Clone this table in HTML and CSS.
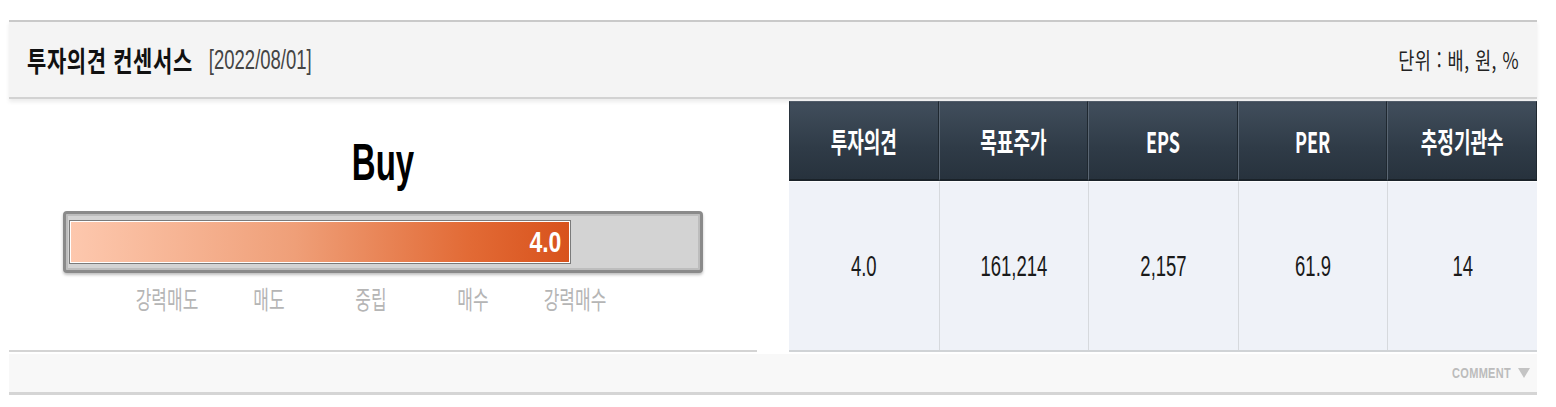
FILE: index.html
```html
<!DOCTYPE html>
<html lang="ko">
<head>
<meta charset="utf-8">
<title>투자의견 컨센서스</title>
<link rel="stylesheet" href="styles.css">
</head>
<body>
<div class="wrap">
  <div class="head">
    <div class="head-left">
      <span class="title sy">투자의견 컨센서스</span>
      <span class="date sy">[2022/08/01]</span>
    </div>
    <span class="unit sy">단위 : 배, 원, %</span>
  </div>
  <div class="content">
    <div class="gauge-panel">
      <div class="opinion"><span class="buy sy">Buy</span></div>
      <div class="bar">
        <div class="track">
          <div class="fill" style="width: 80%"><span class="score sy">4.0</span></div>
        </div>
      </div>
      <div class="labels">
        <span class="lab"><span class="sy">강력매도</span></span>
        <span class="lab"><span class="sy">매도</span></span>
        <span class="lab"><span class="sy">중립</span></span>
        <span class="lab"><span class="sy">매수</span></span>
        <span class="lab"><span class="sy">강력매수</span></span>
      </div>
    </div>
    <div class="table">
      <div class="th"><span class="sy">투자의견</span></div>
      <div class="th"><span class="sy">목표주가</span></div>
      <div class="th"><span class="sy">EPS</span></div>
      <div class="th"><span class="sy">PER</span></div>
      <div class="th"><span class="sy">추정기관수</span></div>
      <div class="td"><span class="sy">4.0</span></div>
      <div class="td"><span class="sy">161,214</span></div>
      <div class="td"><span class="sy">2,157</span></div>
      <div class="td"><span class="sy">61.9</span></div>
      <div class="td"><span class="sy">14</span></div>
    </div>
  </div>
  <div class="foot">
    <span class="comment sy">COMMENT</span>
    <span class="tri"></span>
  </div>
</div>
</body>
</html>
```

FILE: styles.css
```css
* { box-sizing: border-box; }
html, body { margin: 0; padding: 0; background: #fff; }
body {
  font-family: "Liberation Sans", "Noto Sans CJK KR", sans-serif;
  color: #222;
}
.wrap {
  width: 1528px;
  margin: 20px 0 0 9px;
}
.sy {
  display: inline-block;
  transform: scaleY(1.55);
}
.head {
  height: 79px;
  background: #f4f4f4;
  border-top: 2px solid #c9c9c9;
  border-bottom: 2px solid #d2d2d2;
  box-shadow: 0 3px 4px rgba(0, 0, 0, 0.08);
  display: flex;
  align-items: center;
  justify-content: space-between;
  padding: 0 18px;
  position: relative;
  z-index: 1;
}
.head-left { display: flex; align-items: center; gap: 16px; }
.title {
  font-family: "Noto Sans CJK KR", sans-serif;
  font-weight: 700;
  font-size: 21px;
  letter-spacing: 0.6px;
  color: #111;
  transform: scaleY(1.35);
}
.date {
  font-size: 18.5px;
  color: #444;
  transform: scaleY(1.45);
}
.unit {
  font-family: "Noto Sans CJK KR", sans-serif;
  font-size: 17.5px;
  color: #222;
  transform: scaleY(1.3);
  letter-spacing: 0.5px;
}
.content {
  display: flex;
  gap: 32px;
  margin-top: 2px;
}
.gauge-panel {
  width: 748px;
  height: 251px;
  border-bottom: 2px solid #d4d4d4;
  padding: 0 0 0 54px;
}
.opinion {
  width: 640px;
  text-align: center;
  height: 110px;
  line-height: 136px;
}
.buy {
  font-size: 33px;
  font-weight: 700;
  color: #000;
  transform: scaleY(1.55);
  line-height: 1;
}
.bar {
  width: 640px;
  height: 62px;
  border: 3px solid #8a8a8a;
  border-radius: 4px;
  background: #d3d3d3;
  box-shadow: inset 0 0 0 2px #bdbdbd, 0 2px 3px rgba(0, 0, 0, 0.25);
  padding: 6px 3px;
}
.track { height: 44px; }
.fill {
  height: 44px;
  border: 1px solid #7a7a7a;
  box-shadow: inset 0 0 0 1px #fff;
  background: linear-gradient(to right, #fdc8ae, #ef9f78 45%, #e26a35 80%, #d8521c);
  display: flex;
  align-items: center;
  justify-content: flex-end;
  padding-right: 9px;
}
.score {
  color: #fff;
  font-weight: 700;
  font-size: 23px;
  transform: scaleY(1.3);
  line-height: 1;
}
.labels {
  display: flex;
  margin-left: 53px;
  margin-top: 13px;
}
.lab {
  width: 102px;
  text-align: center;
  font-family: "Noto Sans CJK KR", sans-serif;
  font-size: 17px;
  color: #b5b5b5;
  line-height: 24px;
}
.lab .sy { transform: scaleY(1.5); }
.table {
  width: 748px;
  height: 251px;
  display: grid;
  grid-template-columns: repeat(5, 1fr);
  grid-template-rows: 80px 1fr;
  border-bottom: 2px solid #d0d3d6;
  background: #eff2f8;
}
.th {
  background: linear-gradient(to bottom, #414e5c, #2f3b47 60%, #27323d);
  border-top: 1px solid #56626f;
  border-left: 1px solid #5a6673;
  border-right: 1px solid #1f2830;
  border-bottom: 2px solid #1a2229;
  display: flex;
  align-items: center;
  justify-content: center;
  color: #fff;
  font-family: "Noto Sans CJK KR", sans-serif;
  font-weight: 700;
  font-size: 18px;
}
.th:first-child { border-left-color: #2a343e; }
.td {
  display: flex;
  align-items: center;
  justify-content: center;
  border-left: 1px solid #d6d9dd;
  border-top: 1px solid #fbfcfd;
  font-size: 18.5px;
  color: #1a1a1a;
}
.td:nth-child(6) { border-left: none; }
.td .sy { transform: scaleY(1.6); }
.foot {
  margin-top: 2px;
  height: 41px;
  background: #f8f8f8;
  border-bottom: 3px solid #d5d5d5;
  display: flex;
  align-items: center;
  justify-content: flex-end;
  gap: 7px;
  padding-right: 7px;
}
.comment {
  font-size: 11px;
  font-weight: 700;
  color: #bcbcbc;
  letter-spacing: 0.3px;
  transform: scaleY(1.35);
}
.tri {
  width: 0;
  height: 0;
  border-left: 6px solid transparent;
  border-right: 6px solid transparent;
  border-top: 10px solid #c4c4c4;
}
```
